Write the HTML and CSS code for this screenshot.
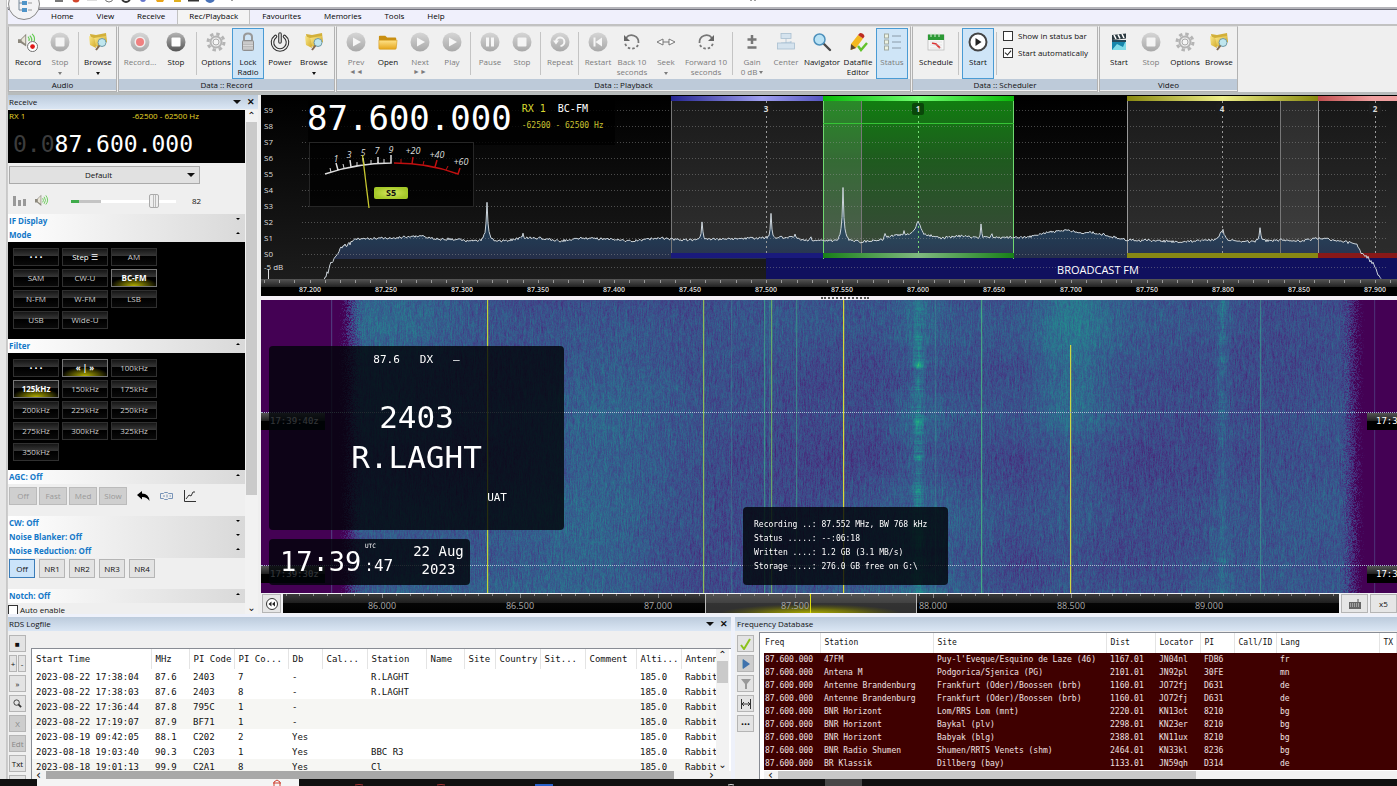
FILE: index.html
```html
<!DOCTYPE html>
<html lang="en">
	<head>
		<meta charset="utf-8">
		<title>SDR Console</title>
		<link rel="stylesheet" href="styles.css">
	</head>
	<body>
		<svg class="defs" aria-hidden="true">
			<defs>
				<linearGradient id="gDark" x2="0" y2="1"><stop offset="0" stop-color="#b5b5b5"/><stop offset="1" stop-color="#555"/></linearGradient>
				<linearGradient id="gDim" x2="0" y2="1"><stop offset="0" stop-color="#d6d6d6"/><stop offset="1" stop-color="#a8a8a8"/></linearGradient>
				<linearGradient id="gGold" x2="0" y2="1"><stop offset="0" stop-color="#ffe38a"/><stop offset="1" stop-color="#e5a51a"/></linearGradient>
				<linearGradient id="gYel" x2="1" y2="1"><stop offset="0" stop-color="#fbe98a"/><stop offset="1" stop-color="#d2a928"/></linearGradient>
			</defs>
			<symbol id="speaker" viewBox="0 0 20 20">
				<path d="M0 7h3l6-6v16l-6-5H0z" fill="#8b877c"/><path d="M4 7l4-4v11l-4-3z" fill="#e9e5d8"/>
				<path d="M11 6q2 3 0 6M13 4q4 5 0 10M15.500 2q5 7 0 13" fill="none" stroke="#63cb52" stroke-width="1.300"/>
			</symbol>
			<symbol id="recsound" viewBox="0 0 22 22">
				<path d="M0 8h3l6-6v14l-6-4H0z" fill="#8b877c"/><path d="M4 8l4-4v9l-4-3z" fill="#e9e5d8"/>
				<path d="M11 5q2 2 1 5M13 4q3 3 2 6M15.500 2q4 4 2 9" fill="none" stroke="#63cb52" stroke-width="1.200"/>
				<circle cx="16" cy="16" r="5.500" fill="#fff" stroke="#666"/><circle cx="16" cy="16" r="2.600" fill="#e01818"/>
			</symbol>
			<symbol id="stop" viewBox="0 0 20 20"><circle cx="10" cy="10" r="9.500" fill="url(#gDark)"/><rect x="5.500" y="5.500" width="9" height="9" rx="1" fill="#fff"/></symbol>
			<symbol id="stopdim" viewBox="0 0 20 20"><circle cx="10" cy="10" r="9.500" fill="url(#gDim)"/><rect x="5.500" y="5.500" width="9" height="9" rx="1" fill="#f4f4f4"/></symbol>
			<symbol id="recdim" viewBox="0 0 20 20"><circle cx="10" cy="10" r="9.500" fill="url(#gDim)"/><circle cx="10" cy="10" r="5.500" fill="#f0eeee"/><circle cx="10" cy="10" r="4" fill="#f08080"/></symbol>
			<symbol id="playdim" viewBox="0 0 20 20"><circle cx="10" cy="10" r="9.500" fill="url(#gDim)"/><path d="M7 5.500l8 4.500-8 4.500z" fill="#f6f6f6"/></symbol>
			<symbol id="pausedim" viewBox="0 0 20 20"><circle cx="10" cy="10" r="9.500" fill="url(#gDim)"/><path d="M6 5.500h3v9H6zM11 5.500h3v9h-3z" fill="#f6f6f6"/></symbol>
			<symbol id="restartdim" viewBox="0 0 20 20"><circle cx="10" cy="10" r="9.500" fill="url(#gDim)"/><path d="M5.500 5.500h2v9h-2zM14 5.500v9L7.500 10z" fill="#f6f6f6"/></symbol>
			<symbol id="repeatdim" viewBox="0 0 20 20"><circle cx="10" cy="10" r="9.500" fill="url(#gDim)"/><path d="M6 9.500a4.200 4.200 0 1 1 4.500 4.500" fill="none" stroke="#f6f6f6" stroke-width="2"/><path d="M3 8.500h6l-3 4z" fill="#f6f6f6"/></symbol>
			<symbol id="browse" viewBox="0 0 20 20">
				<path d="M2 2l6 1 10-2 1 9-9 5-6-2z" fill="#d2b03a"/><path d="M1 4l5 2 2 10-6-3z" fill="url(#gYel)"/><path d="M6 6l12-2-1 7-9 3z" fill="url(#gYel)"/>
				<circle cx="14" cy="10.500" r="4" fill="#bfe6ee" stroke="#6f99a6"/><path d="M11.500 13.500L8 18" stroke="#82694e" stroke-width="2"/>
			</symbol>
			<symbol id="gear" viewBox="0 0 20 20">
				<circle cx="10" cy="10" r="8" fill="none" stroke="#b4b4b4" stroke-width="3" stroke-dasharray="3.400 2.883"/>
				<circle cx="10" cy="10" r="5.500" fill="#ededed" stroke="#b4b4b4" stroke-width="2"/><circle cx="10" cy="10" r="3" fill="#f5f5f5" stroke="#aaa"/>
			</symbol>
			<symbol id="lock" viewBox="0 0 20 20"><path d="M6 9V5q0-3.500 4-3.500T14 5v4" fill="none" stroke="#999" stroke-width="2"/><rect x="4.500" y="8.500" width="11" height="10" rx="1" fill="#bbb" stroke="#8f8f8f"/><path d="M5 11h10M5 13.500h10M5 16h10" stroke="#d9d9d9"/></symbol>
			<symbol id="power" viewBox="0 0 20 20"><g fill="none" stroke-linecap="round"><path d="M5.500 4.500a7.500 7.500 0 1 0 9 0M10 2v8" stroke="#333" stroke-width="3.600"/><path d="M5.500 4.500a7.500 7.500 0 1 0 9 0M10 2v8" stroke="#f4f4f4" stroke-width="1.400"/></g></symbol>
			<symbol id="folder" viewBox="0 0 22 20"><path d="M1 17V4q0-1 1-1h6l2 2h9q1 0 1 1v11z" fill="#c98f12"/><path d="M1 17V8h20l-1 9q0 1-1 1H2q-1 0-1-1z" fill="url(#gGold)" stroke="#d59c1c" stroke-width=".6"/></symbol>
			<symbol id="back" viewBox="0 0 20 20"><path d="M4 6a7 7 0 0 1 12.500 5" fill="none" stroke="#777" stroke-width="1.800"/><path d="M16 13a7 7 0 0 1-13-2" fill="none" stroke="#777" stroke-width="1.800" stroke-dasharray="2.500 2"/><path d="M2 3v6h6z" fill="#666"/></symbol>
			<symbol id="seek" viewBox="0 0 20 20"><path d="M1 10l6-3v6zM19 10l-6-3v6zM7 10h6" fill="#fff" stroke="#777"/></symbol>
			<symbol id="gain" viewBox="0 0 20 20"><path d="M10 3v9M5.500 7.500h9M5.500 15.500h9" stroke="#777" stroke-width="2.500"/></symbol>
			<symbol id="center" viewBox="0 0 20 20"><g fill="#d5e3ee" stroke="#a9bfd0" stroke-width=".8"><rect x="5" y="1.500" width="10" height="5"/><path d="M10 6.500V11M5 11h10v-2"/><rect x="1.500" y="11" width="17" height="6"/></g></symbol>
			<symbol id="loupe" viewBox="0 0 20 20"><path d="M12 12l6 6" stroke="#4a4a4a" stroke-width="2.400" stroke-linecap="round"/><circle cx="7.500" cy="7.500" r="5.500" fill="#b9e2f5" stroke="#4d90bb" stroke-width="1.500"/></symbol>
			<symbol id="edit" viewBox="0 0 20 20"><path d="M3 12L10 3l5 3.500-7 9.500-5 2z" fill="#f3b81e"/><path d="M10 3l2-2q4 0 4.500 3.500L15 6.500z" fill="#bd2d22"/><path d="M2.500 18l.5-6 5 4z" fill="#5b4630"/><path d="M10 14l3 4 6-7" fill="none" stroke="#63c22b" stroke-width="2.400"/></symbol>
			<symbol id="status" viewBox="0 0 20 20"><g fill="#edf3e2" stroke="#a2aaa2"><rect x="2.500" y="2" width="4" height="4"/><rect x="2.500" y="8" width="4" height="4"/><rect x="2.500" y="14" width="4" height="4"/></g><path d="M10 4h9M10 10h9M10 16h9" stroke="#8a9aa8"/></symbol>
			<symbol id="calendar" viewBox="0 0 20 20"><rect x="2" y="3" width="16" height="15" fill="#f7f7f7" stroke="#b5b5b5" stroke-width=".7"/><path d="M2 2.500h16V8H2z" fill="#2c9a35"/><path d="M5 1v4M9 1v4M13 1v4" stroke="#d9f0d9"/><path d="M6 11l4 1 4 4" fill="none" stroke="#d33" stroke-width="1.800"/><path d="M4 10h12M4 13h12M4 16h12" stroke="#ccc" stroke-width=".5"/></symbol>
			<symbol id="start" viewBox="0 0 20 20"><circle cx="10" cy="10" r="8.500" fill="#fff" stroke="#444" stroke-width="2"/><path d="M7.500 6l6 4-6 4z" fill="#222"/></symbol>
			<symbol id="clap" viewBox="0 0 20 20"><path d="M3 3l14-1.500v5L3 8z" fill="#2b3940"/><path d="M5 3l2 4M9 2.500l2 4M13 2l2 4" stroke="#fff" stroke-width="1.600"/><path d="M3 8h14v10H3z" fill="#1786ac"/><path d="M3 18l5-6 6 3 3-7v10z" fill="#80dbe8"/><path d="M3 8h14v2H3z" fill="#24485a"/></symbol>
		</svg>

		<div class="app">
			<div class="titlebar">
				<svg width="800" height="7" aria-hidden="true">
					<path d="M48 0h8v2h-8z" fill="#777"/><circle cx="69" cy="-1" r="3.500" fill="#d2452c"/><path d="M80 0h10" stroke="#bbb"/><circle cx="102" cy="-2" r="4" fill="none" stroke="#777"/><circle cx="119" cy="-2" r="4" fill="none" stroke="#333" stroke-width="2"/><circle cx="136" cy="-1" r="3" fill="#67c"/><path d="M149 0h8l-1 2h-6z" fill="#e9a51a"/><path d="M167 0h7v2h-7z" fill="#e0b020"/><path d="M181 0h11" stroke="#333" stroke-width="3"/><circle cx="203" cy="-2" r="5" fill="#4872b8"/><path d="M224 0h2M743 0h2M747 0h2" stroke="#444"/>
				</svg>
			</div>
			<button class="orb" aria-label="Application menu">
				<svg width="20" height="20" viewBox="0 0 20 20"><path d="M5 4v12h5M5 9h5" fill="none" stroke="#789"/><rect x="2" y="1" width="6" height="5" fill="#4f94c8"/><rect x="8" y="7" width="5" height="4" fill="#4f94c8"/><rect x="8" y="14" width="5" height="4" fill="#4f94c8"/><path d="M14 9h4M14 16h4" stroke="#999"/></svg>
			</button>

			<nav class="tabs">
				<a href="#">Home</a>
				<a href="#">View</a>
				<a href="#">Receive</a>
				<a href="#" class="ac">Rec/Playback</a>
				<a href="#">Favourites</a>
				<a href="#">Memories</a>
				<a href="#">Tools</a>
				<a href="#">Help</a>
			</nav>

			<div class="ribbon">
				<section class="group">
					<div class="tools">
						<button><svg><use href="#recsound"/></svg>Record</button>
						<button class="dim"><svg><use href="#stopdim"/></svg>Stop<i class="down"></i></button>
						<hr>
						<button><svg><use href="#browse"/></svg>Browse<i class="down"></i></button>
					</div>
					<h2>Audio</h2>
				</section>
				<section class="group">
					<div class="tools">
						<button class="w36 dim"><svg><use href="#recdim"/></svg>Record...</button>
						<button class="w36"><svg><use href="#stop"/></svg>Stop</button>
						<hr>
						<button><svg><use href="#gear"/></svg>Options</button>
						<button class="on"><svg><use href="#lock"/></svg>Lock<br>Radio</button>
						<button><svg><use href="#power"/></svg>Power</button>
						<button class="w36"><svg><use href="#browse"/></svg>Browse<i class="down"></i></button>
					</div>
					<h2>Data :: Record</h2>
				</section>
				<section class="group">
					<div class="tools">
						<button class="dim"><svg><use href="#playdim"/></svg>Prev<span class="skip">◄◄</span></button>
						<button><svg><use href="#folder"/></svg>Open</button>
						<button class="dim"><svg><use href="#playdim"/></svg>Next<span class="skip">►►</span></button>
						<button class="dim"><svg><use href="#playdim"/></svg>Play</button>
						<hr>
						<button class="dim"><svg><use href="#pausedim"/></svg>Pause</button>
						<button class="dim"><svg><use href="#stopdim"/></svg>Stop</button>
						<hr>
						<button class="dim"><svg><use href="#repeatdim"/></svg>Repeat</button>
						<hr>
						<button class="dim"><svg><use href="#restartdim"/></svg>Restart</button>
						<button class="w36 dim"><svg><use href="#back"/></svg>Back 10<br>seconds</button>
						<button class="dim"><svg><use href="#seek"/></svg>Seek<i class="down"></i></button>
						<button class="w48 dim"><svg class="flip"><use href="#back"/></svg>Forward 10<br>seconds</button>
						<hr>
						<button class="dim"><svg><use href="#gain"/></svg>Gain<span class="line">0 dB<i class="down"></i></span></button>
						<button class="w36 dim"><svg><use href="#center"/></svg>Center</button>
						<button class="w36"><svg><use href="#loupe"/></svg>Navigator</button>
						<button class="w36"><svg><use href="#edit"/></svg>Datafile<br>Editor</button>
						<button class="on dim"><svg><use href="#status"/></svg>Status</button>
					</div>
					<h2>Data :: Playback</h2>
				</section>
				<section class="group">
					<div class="tools">
						<button class="w40"><svg><use href="#calendar"/></svg>Schedule</button>
						<hr>
						<button class="on"><svg><use href="#start"/></svg>Start</button>
						<hr>
						<div class="checks">
							<label><input type="checkbox">Show in status bar</label>
							<label><input type="checkbox" checked>Start automatically</label>
						</div>
					</div>
					<h2>Data :: Scheduler</h2>
				</section>
				<section class="group">
					<div class="tools">
						<button><svg><use href="#clap"/></svg>Start</button>
						<button class="dim"><svg><use href="#stopdim"/></svg>Stop</button>
						<button class="w36"><svg><use href="#gear"/></svg>Options</button>
						<button><svg><use href="#browse"/></svg>Browse</button>
					</div>
					<h2>Video</h2>
				</section>
			</div>

			<div class="work">
				<aside class="side">
					<header class="bar"><h2>Receive</h2><i class="down big"></i><button aria-label="Close">✕</button></header>
					<div class="sidebody">
						<div class="panels">
							<div class="vfo">
								<div class="vfotop"><span>RX 1</span><span>-62500 - 62500 Hz</span></div>
								<div class="vfonum"><span>0.0</span>87.600.000</div>
							</div>
							<div class="audio">
								<div class="device"><select aria-label="Output device"><option>Default</option></select><i class="down big"></i></div>
								<div class="volume">
									<svg width="14" height="12"><path d="M1 1h3v10H1zM6 5h3v6H6zM11 4h3v7h-3z" fill="#999"/></svg>
									<svg class="spk" width="14" height="14"><use href="#speaker"/></svg>
									<input type="range" id="vol" value="82" aria-label="Volume"><output for="vol">82</output>
								</div>
							</div>
							<h3>IF Display<i class="down small"></i></h3>
							<h3>Mode<i class="up"></i></h3>
							<div class="pad" id="mode">
								<button class="hi">• • •</button><button class="hi">Step ☰</button><button>AM</button>
								<button>SAM</button><button>CW-U</button><button class="ac">BC-FM</button>
								<button>N-FM</button><button>W-FM</button><button>LSB</button>
								<button>USB</button><button>Wide-U</button>
							</div>
							<h3>Filter<i class="up"></i></h3>
							<div class="pad" id="filter">
								<button class="hi">• • •</button><button class="ac">« | »</button><button>100kHz</button>
								<button class="ac">125kHz</button><button>150kHz</button><button>175kHz</button>
								<button>200kHz</button><button>225kHz</button><button>250kHz</button>
								<button>275kHz</button><button>300kHz</button><button>325kHz</button>
								<button>350kHz</button>
							</div>
							<h3>AGC: Off<i class="up"></i></h3>
							<div class="agc">
								<button disabled>Off</button><button disabled>Fast</button><button disabled>Med</button><button disabled>Slow</button>
								<svg width="13" height="12" viewBox="0 0 13 12"><path d="M0 5l5-4v2.500q7 0 7.500 7.500Q10 7 5 7v2.500z" fill="#000"/></svg>
								<svg width="13" height="12" viewBox="0 0 13 12"><path d="M.5 3.500h3l1-1h3l1 1h4v5h-4l-1 1h-3l-1-1h-3zM3 6h2M7 4.500v3M9.500 6h1.500" fill="none" stroke="#7894b8"/></svg>
								<svg width="13" height="12" viewBox="0 0 13 12"><path d="M1.500 0v11.500H13M3 9l3-4 2 1 2-4h2" fill="none" stroke="#333"/></svg>
							</div>
							<h3>CW: Off<i class="down small"></i></h3>
							<h3>Noise Blanker: Off<i class="down small"></i></h3>
							<h3>Noise Reduction: Off<i class="up"></i></h3>
							<div class="nr">
								<button class="ac">Off</button><button>NR1</button><button>NR2</button><button>NR3</button><button>NR4</button>
							</div>
							<h3>Notch: Off<i class="up"></i></h3>
							<label class="notch"><input type="checkbox">Auto enable</label>
						</div>
						<div class="vscroll"><span>⌃</span><b></b><span class="end">⌄</span></div>
					</div>
				</aside>

				<main class="view">
					<div class="spectrum">
						<svg id="spec" width="100%" height="199">
							<defs>
								<linearGradient id="bg" x2="0" y2="1"><stop offset="0" stop-color="#000"/><stop offset="1" stop-color="#1c1c1c"/></linearGradient>
								<linearGradient id="fill" x2="0" y2="1"><stop offset="0" stop-color="#24536b"/><stop offset=".6" stop-color="#26405f"/><stop offset="1" stop-color="#2c2448"/></linearGradient>
								<linearGradient id="green" x2="0" y2="1"><stop offset="0" stop-color="#10800f"/><stop offset=".4" stop-color="#1f5a1f"/><stop offset="1" stop-color="#3d463d"/></linearGradient>
								<linearGradient id="b3"><stop offset="0" stop-color="#252590"/><stop offset=".6" stop-color="#a0a0f0"/><stop offset="1" stop-color="#5555c0"/></linearGradient>
								<linearGradient id="b1"><stop offset="0" stop-color="#08b808"/><stop offset=".5" stop-color="#70ff70"/><stop offset="1" stop-color="#08b808"/></linearGradient>
								<linearGradient id="b1b"><stop offset="0" stop-color="#188018"/><stop offset=".5" stop-color="#80b880"/><stop offset="1" stop-color="#188018"/></linearGradient>
								<linearGradient id="b4"><stop offset="0" stop-color="#888810"/><stop offset=".5" stop-color="#eeee88"/><stop offset="1" stop-color="#888810"/></linearGradient>
								<linearGradient id="b2"><stop offset="0" stop-color="#c05050"/><stop offset=".3" stop-color="#f0a0a0"/></linearGradient>
								<linearGradient id="axis" x2="0" y2="1"><stop offset="0" stop-color="#555"/><stop offset=".5" stop-color="#222"/><stop offset=".5" stop-color="#000"/><stop offset="1" stop-color="#000"/></linearGradient>
								<radialGradient id="badge"><stop offset="0" stop-color="#d8ea60"/><stop offset="1" stop-color="#a4c828"/></radialGradient>
								<clipPath id="clip"><rect width="100%" height="183"/></clipPath>
							</defs>
							<rect width="100%" height="183" fill="url(#bg)"/>
							<rect x="410" width="152" height="162" fill="#fff" fill-opacity=".1"/>
							<rect x="562" width="191" height="162" fill="url(#green)"/>
							<rect x="562" width="38" height="162" fill="#fff" fill-opacity=".1"/>
							<rect x="866" width="191" height="162" fill="#fff" fill-opacity=".1"/>
							<rect x="1019" width="38" height="162" fill="#fff" fill-opacity=".08"/>
							<rect x="1057" width="100%" height="162" fill="#fff" fill-opacity=".09"/>
							<path id="area" fill="url(#fill)" fill-opacity=".8"/>
							<rect x="505" y="162" width="100%" height="21" fill="#10105e"/>
							<g id="grid"></g>
							<path d="M410.500 0v162M600.500 0v162M1019.500 0v162" stroke="#777"/>
							<path d="M866.500 0v162M1057.500 0v162" stroke="#999"/>
							<path d="M562.500 0v163M752.500 0v163" stroke="#70d870"/>
							<path d="M562 27.500h191" stroke="#36c436"/>
							<path d="M505.500 5v152M961.500 5v152M1114.500 5v152" stroke="#999" stroke-dasharray="2 3"/>
							<path d="M657.500 5v152" stroke="#7d7" stroke-dasharray="2 3"/>
							<rect x="410" width="152" height="5" fill="url(#b3)"/><rect x="410" y="157" width="152" height="5" fill="#1a1a7c"/>
							<rect x="562" width="191" height="5" fill="url(#b1)"/><rect x="562" y="157" width="191" height="5" fill="url(#b1b)"/>
							<rect x="866" width="191" height="5" fill="url(#b4)"/><rect x="866" y="157" width="191" height="5" fill="#888814"/>
							<rect x="1057" width="180" height="5" fill="url(#b2)"/><rect x="1057" y="157" width="100%" height="5" fill="#881818"/>
							<rect x="499" y="7" width="12" height="12" rx="2" fill="#1c1c1c"/><rect x="651" y="7" width="12" height="12" rx="2" fill="#0a470a"/><rect x="955" y="7" width="12" height="12" rx="2" fill="#1c1c1c"/><rect x="1108" y="7" width="12" height="12" rx="2" fill="#1c1c1c"/>
							<g class="num"><text x="505" y="16">3</text><text x="657" y="16">1</text><text x="961" y="16">4</text><text x="1114" y="16">2</text></g>
							<path id="trace" fill="none" stroke="#ccd4da" clip-path="url(#clip)"/>
							<text class="fm" x="837" y="178">BROADCAST FM</text>
							<rect y="183" width="100%" height="16" fill="url(#axis)"/>
							<g id="axislabels" class="axis"></g>
							<path d="M7.500 173v10" stroke="#ddd"/>
							<rect x="47" y="1" width="307" height="48" fill="#000" fill-opacity=".8"/>
							<rect x="48.500" y="46.500" width="164" height="64" fill="#000" fill-opacity=".75" stroke="#262626"/>
							<g fill="none" stroke="#ddd" stroke-width="1.500">
								<path d="M64 78Q96 67 130 67V59M77 74l-2-7M90 71l-1-7M103 69l-1-7M117 68v-7"/>
								<path d="M70 76l-1-4M83 72l-1-4M96 70v-4M110 68v-4M123 67v-4" stroke-width="1"/>
								<path d="M133 67Q168 67 197 78l2-6M151 68l1-7M174 71l2-7" stroke="#c01010"/><path d="M140 67v-4M162 69l1-4M185 74l2-4" stroke="#c01010" stroke-width="1"/>
							</g>
							<g class="scale"><text x="75" y="66">1</text><text x="88" y="62">3</text><text x="102" y="60">5</text><text x="116" y="58">7</text><text x="130" y="57">9</text><text x="152" y="58">+20</text><text x="176" y="62">+40</text><text x="200" y="69">+60</text></g>
							<path d="M101.500 59l6.500 53" stroke="#c8c830" stroke-width="1.300"/>
							<rect x="113" y="91" width="34" height="12" rx="2" fill="url(#badge)"/><text class="s5" x="130" y="100">S5</text>
						</svg>
						<div class="bigfreq">
							<span class="freq">87.600.000</span>
							<span class="rx"><b>RX 1</b> BC-FM<small>-62500 - 62500 Hz</small></span>
						</div>
					</div>
					<div class="split"><i></i></div>
					<div class="fall">
						<canvas id="fall"></canvas>
						<div class="timeline first"><span>17:39:40z</span><span class="r">17:39:40z</span></div>
						<div class="timeline second"><span>17:39:30z</span><span class="r">17:39:30z</span></div>
						<div class="rds">
							<p class="top">87.6<span>DX</span>—</p>
							<p class="pi">2403</p>
							<p class="ps">R.LAGHT</p>
							<p class="uat">UAT</p>
						</div>
						<div class="clock">
							<div class="time">17:39<small>:47</small><sup>UTC</sup></div>
							<div class="date">22 Aug<br>2023</div>
						</div>
						<pre class="recinfo">Recording ..: 87.552 MHz, BW 768 kHz
Status .....: --:06:18
Written ....: 1.2 GB (3.1 MB/s)
Storage ....: 276.0 GB free on G:\</pre>
					</div>
					<div class="navbar">
						<button class="rew" aria-label="Rewind"><svg width="14" height="14" viewBox="0 0 14 14"><circle cx="7" cy="7" r="5.500" fill="#fff" stroke="#333"/><path d="M6.500 4.500v5L3.500 7zM10 4.500v5L7 7z" fill="#222"/></svg></button>
						<svg id="nav" class="scaleline" height="19">
							<defs>
								<linearGradient id="navbg" x2="0" y2="1"><stop offset="0" stop-color="#3a3a3a"/><stop offset=".5" stop-color="#1c1c1c"/><stop offset=".5" stop-color="#050505"/><stop offset="1" stop-color="#000"/></linearGradient>
								<radialGradient id="glow"><stop offset="0" stop-color="#b8b800"/><stop offset=".5" stop-color="#8a8a00" stop-opacity=".7"/><stop offset="1" stop-color="#606000" stop-opacity="0"/></radialGradient>
							</defs>
							<rect width="100%" height="19" fill="url(#navbg)"/>
							<rect x="422" width="212" height="19" fill="#777" fill-opacity=".4"/>
							<ellipse cx="528" cy="20" rx="92" ry="10" fill="url(#glow)"/>
							<path d="M422.500 0v19M633.500 0v19" stroke="#bbb"/>
							<path d="M527.500 0v19" stroke="#e0e010"/>
							<g id="navlabels" class="navtext"></g>
						</svg>
						<button class="kbd" aria-label="Keyboard"><svg width="12" height="10" viewBox="0 0 12 10"><path d="M9 0v3" stroke="#555"/><rect y="3" width="12" height="7" fill="#666"/><path d="M1 5h10M1 7h10" stroke="#ddd" stroke-dasharray="1 1"/></svg></button>
						<button class="x5">x5</button>
					</div>
				</main>
			</div>

			<div class="docks">
				<section class="dock log">
					<header class="bar"><h2>RDS Logfile</h2><i class="down big"></i><button aria-label="Close log">✕</button></header>
					<div class="dockbody">
						<div class="vbar">
							<button>■</button>
							<div class="pair"><button>+</button><button>-</button></div>
							<button>»</button>
							<button aria-label="Search"><svg width="9" height="9" viewBox="0 0 10 10"><circle cx="4" cy="4" r="3" fill="none" stroke="#333"/><path d="M6 6l3 3" stroke="#333" stroke-width="2"/></svg></button>
							<button disabled>X</button>
							<button disabled>Edt</button>
							<button>Txt</button>
							<button aria-label="More"></button>
						</div>
						<div class="grid">
							<div class="gridmain">
								<div class="clipx">
									<table>
										<colgroup><col class="c119"><col class="c38"><col class="c45"><col class="c54"><col class="c34"><col class="c45"><col class="c59"><col class="c38"><col class="c31"><col class="c45"><col class="c45"><col class="c51"><col class="c45"><col class="c45"></colgroup>
										<thead><tr><th>Start Time</th><th>MHz</th><th>PI Code</th><th>PI Co...</th><th>Db</th><th>Cal...</th><th>Station</th><th>Name</th><th>Site</th><th>Country</th><th>Sit...</th><th>Comment</th><th>Alti...</th><th>Antenna</th></tr></thead>
										<tbody id="logrows"></tbody>
									</table>
								</div>
								<div class="vscroll"><span>⌃</span><b></b><span class="end">⌄</span></div>
							</div>
							<div class="hscroll"><span>‹</span><b></b><span>›</span></div>
						</div>
					</div>
				</section>
				<section class="dock db">
					<header class="bar"><h2>Frequency Database</h2></header>
					<div class="dockbody">
						<div class="vbar">
							<button aria-label="Apply"><svg width="12" height="12"><path d="M1 7l3 4 6-10" fill="none" stroke="#8cc21e" stroke-width="2"/></svg></button>
							<button class="grey" aria-label="Play"><svg width="12" height="12"><path d="M3 1v10l7-5z" fill="#3f72ad"/><path d="M3 1L2 2v8l1 1z" fill="#8ab"/></svg></button>
							<button aria-label="Filter"><svg width="12" height="12"><path d="M1 1h10L7 6v5H5V6z" fill="#999"/></svg></button>
							<button aria-label="Fit columns"><svg width="12" height="10"><path d="M1.500 0v10M10.500 0v10M2 5h8M4 3L2 5l2 2M8 3l2 2-2 2" fill="none" stroke="#333"/></svg></button>
							<button>•••</button>
						</div>
						<div class="grid">
							<div class="clipx">
								<table>
									<colgroup><col class="c56"><col class="c113"><col class="c173"><col class="c49"><col class="c45"><col class="c34"><col class="c42"><col class="c103"><col></colgroup>
									<thead><tr><th>Freq</th><th>Station</th><th>Site</th><th>Dist</th><th>Locator</th><th>PI</th><th>Call/ID</th><th>Lang</th><th>TX</th></tr></thead>
									<tbody id="dbrows"></tbody>
								</table>
							</div>
							<div class="hscroll"><span>‹</span><b></b></div>
						</div>
					</div>
				</section>
			</div>

			<footer class="taskbar">
				<div class="search"><svg width="12" height="7"><path d="M3 7V3l3-2 3 2v4M2 4h8" fill="none" stroke="#d04030"/></svg></div>
				<svg width="600" height="7"><path d="M56 6q4-1 8 0M138 6q4-1 8 0" stroke="#a33" fill="none"/><path d="M236 6h18" stroke="#2860c8" stroke-width="2"/><path d="M429 6q3-1 6 0" stroke="#ddd" fill="none"/><rect x="526" width="37" height="7" fill="#484848"/></svg>
			</footer>
		</div>
		<script src="script.js"></script>
	</body>
</html>
```
FILE: styles.css
```css
*{margin: 0; padding: 0; box-sizing: border-box;}
body{font-family: "Open Sans", "Noto Sans", sans-serif; font-size: 8px; line-height: 10px; color: #111; background: #efefef; overflow: hidden;}
button, input, select{font: inherit; color: inherit;}
button{display: flex; align-items: center; justify-content: center; border: 1px solid #b5b5b5; background: #e3e3e3;}
h2, h3{font-size: 8px; font-weight: normal;}
table{border-collapse: collapse; table-layout: fixed; width: 100%;}
.defs{position: absolute; width: 0; height: 0;}
.app{position: relative; display: flex; flex-direction: column; height: 100vh; padding-left: 8px; background: linear-gradient(90deg, #e6e6e6 6px, #aaa 7px, #efefef 8px); overflow: hidden;}

/* arrows */
.down{display: block; width: 0; height: 0; border: 2px solid transparent; border-top: 3px solid currentColor; border-bottom: 0;}
.down.big{border-width: 4px; border-top-width: 4px; border-bottom: 0;}
.down.small{border-width: 2px; border-bottom: 0;}
.up{display: block; width: 0; height: 0; border: 2px solid transparent; border-bottom: 2px solid #000; border-top: 0;}

/* title and tabs */
.titlebar{height: 9px; flex: none; margin-left: -1px; background: #fff; border-bottom: 2px solid #b5b5ba;}
.titlebar svg{display: block;}
.orb{position: absolute; left: 8px; top: -12px; width: 32px; height: 32px; border-radius: 50%; background: #f3f3f5; border: 1px solid #888; z-index: 2;}
.tabs{display: flex; flex: none; gap: 1px; height: 15px; padding-left: 32px; background: #f0f0fc; border-top: 1px solid #70707c;}
.tabs a{padding: 0 11px; line-height: 12px; color: #000; text-decoration: none;}
.tabs .ac{background: #f4f4f4; border: 1px solid #c2c2c2; border-width: 0 1px;}

/* ribbon */
.ribbon{display: flex; flex: none; gap: 1px; height: 71px; background: #efefef; border-top: 2px solid #c2c2c2; border-bottom: 3px solid #b8bcbc;}
.group{display: flex; flex-direction: column; border: 1px solid #b2b2b2; border-top-color: #ddd; padding: 1px 2px 1px 3px; background: #f0f0f0; flex: none;}
.group h2{height: 11px; margin: 0 -2px 0 -3px; line-height: 11px; text-align: center; background: #bdcad9;}
.tools{display: flex; flex: 1;}
.tools hr{width: 1px; margin: 4px 3px 4px 2px; border: 0; background: #c4c4c4;}
.tools button{flex-direction: column; justify-content: flex-start; width: 32px; height: 51px; padding-top: 3px; background: none; border: 1px solid transparent; white-space: nowrap;}
.tools button svg{width: 20px; height: 20px; flex: none; margin-bottom: 5px;}
.tools .w36{width: 36px;}
.tools .w40{width: 40px;}
.tools .w48{width: 48px;}
.tools .dim{color: #7c7c7c;}
.tools .on{background: #cfe5f7; border-color: #4a9bd4;}
.tools .down{margin-top: 5px;}
.line{display: flex; align-items: center; gap: 2px;}
.tools .line .down{margin-top: 0;}
.flip{transform: scaleX(-1);}
.skip{font-size: 7px;}
.checks{display: flex; flex-direction: column; gap: 6px; padding: 2px 7px 0 3px;}
.checks label{display: flex; align-items: center; gap: 5px; height: 11px;}
input[type=checkbox]{appearance: none; width: 10px; height: 10px; border: 1px solid #333; background: #fff;}
input[type=checkbox]:checked::after{content: ""; display: block; width: 3px; height: 5px; margin: 0 0 0 2px; border: solid #222; border-width: 0 1px 1px 0; transform: rotate(40deg);}

/* dock title */
.bar{display: flex; align-items: center; gap: 5px; height: 14px; flex: none; padding: 0 3px 0 1px; background: linear-gradient(#bccbdc, #dae6f4);}
.bar h2{flex: 1;}
.bar button{width: 9px; height: 12px; border: 0; background: none; font-size: 9px; font-weight: bold;}

/* receive panel */
.work{display: flex; flex: 1; min-height: 0;}
.side{display: flex; flex-direction: column; width: 250px; margin-right: 3px; flex: none; overflow: hidden;}
.sidebody{display: flex; flex: 1; min-height: 0; padding-top: 1px;}
.panels{flex: 1; min-width: 0; overflow: hidden;}
.vfo{height: 53px; background: #000; color: #fff;}
.vfotop{display: flex; justify-content: space-between; padding: 1px 46px 0 1px; color: #e8d828;}
.vfonum{padding-left: 5px; font: 23px/46px "DejaVu Sans Mono", monospace;}
.vfonum span{color: #3c3c3c;}
.audio{height: 51px; padding: 3px 1px;}
.device{display: flex; align-items: center; width: 191px; height: 18px; padding-right: 4px; border: 1px solid #aaa; background: #e1e1e1;}
.device select{flex: 1; appearance: none; border: 0; background: none; text-align-last: center;}
.volume{display: flex; align-items: center; height: 34px; padding-left: 3px;}
.volume .spk{margin: 0 22px 0 9px;}
.volume output{margin-left: 16px;}
.volume input{appearance: none; width: 105px; height: 16px; background: linear-gradient(90deg, #3fab4b 8px, #c4c4c4 8px, #c4c4c4 30px, #fff 30px) center / 100% 3px no-repeat;}
.volume input::-webkit-slider-thumb{appearance: none; width: 10px; height: 14px; border: 1px solid #aaa; border-radius: 2px; background: linear-gradient(90deg, #eee 3px, #bbb 3px, #bbb 4px, #eee 4px, #eee 5px, #bbb 5px, #bbb 6px, #eee 6px);}
h3{display: flex; justify-content: space-between; align-items: center; height: 14px; padding: 0 5px 0 1px; font-weight: 700; color: #1478c8; background: linear-gradient(90deg, #fff, #d9d9d9);}
h3 i{color: #000; margin-bottom: 4px;}
.pad{display: grid; grid-template-columns: repeat(3, 46px); grid-auto-rows: 18px; gap: 3px; align-content: start; padding: 6px 5px; background: #000;}
.pad button{border-color: #303030; color: #ccc; background: linear-gradient(#161616, #383838 45%, #000 45%, #0a0a0a);}
.pad .hi{color: #fff;}
.pad .ac{border-color: #777; color: #fff; font-weight: bold; background: radial-gradient(ellipse 24px 9px at 50% 100%, #b4b000, transparent), linear-gradient(#161616, #383838 45%, #000 45%);}
#mode{height: 97px;}
#filter{height: 117px;}
.agc, .nr{display: flex; align-items: center; gap: 2px; height: 32px; padding: 0 1px 8px;}
.agc button{width: 28px; height: 18px; color: #999; background: #cfcfcf; border-color: #bbb;}
.agc svg{margin-left: 8px;}
.nr{gap: 4px; height: 31px; padding-bottom: 10px;}
.nr button{width: 26px; height: 19px;}
.nr .ac{background: #cbe4fa; border: 1px solid #3a7cb8;}
.notch{display: flex; align-items: center; gap: 2px; padding-top: 2px;}
.vscroll{display: flex; flex-direction: column; align-items: center; width: 13px; flex: none; background: #f2f2f2; font: 10px/12px "DejaVu Sans", sans-serif;}
.vscroll b{width: 11px; height: 373px; background: #cacaca;}
.vscroll .end{margin-top: auto;}

/* spectrum */
.view{display: flex; flex-direction: column; flex: 1; min-width: 0;}
.spectrum{position: relative; height: 201px; flex: none; padding-top: 1px; background: #000; overflow: hidden;}
.spectrum svg{display: block;}
.spectrum text{fill: #ddd;}
.num{font-weight: bold; text-anchor: middle;}
.spectrum .fm{font-size: 11px; text-anchor: middle; fill: #fff;}
.spectrum .axis{font-size: 7px; font-weight: 600; text-anchor: middle;}
.scale{font-size: 9px; font-style: italic; text-anchor: middle;}
.spectrum .s5{font-size: 9px; font-weight: bold; text-anchor: middle; fill: #111;}
.bigfreq{position: absolute; left: 46px; top: 2px; display: flex; gap: 10px; font-family: "DejaVu Sans Mono", monospace; color: #fff;}
.freq{font-size: 34px; line-height: 42px;}
.rx{padding-top: 5px; font-size: 10px; line-height: 13px; white-space: pre;}
.rx b{margin-right: 6px; font-weight: normal; color: #d8d830;}
.rx small{display: block; margin-top: 4px; font-size: 8px; color: #c8c030;}
.split{display: flex; align-items: center; justify-content: center; height: 4px; flex: none; background: #f4f0f6;}
.split i{width: 48px; height: 0; margin-left: 32px; border-top: 2px dotted #555;}

/* waterfall */
.fall{position: relative; flex: 1; min-height: 0; overflow: hidden; font-family: "DejaVu Sans Mono", monospace; color: #fff;}
.fall canvas{display: block; width: 100%; height: 100%;}
.timeline{position: absolute; left: 0; right: 0; border-top: 1px dotted #a9bccf;}
.timeline.first{top: 112px;}
.timeline.second{top: 265px;}
.timeline span{position: absolute; left: 0; top: 0; width: 64px; padding-left: 9px; font-size: 9px; line-height: 17px; background: linear-gradient(#555, #222 45%, #000 45%);}
.timeline .r{left: auto; right: -34px;}
.rds, .clock, .recinfo{position: absolute; background: rgba(0, 4, 8, .8); border-radius: 4px;}
.rds{left: 8px; top: 46px; width: 295px; height: 184px; text-align: center; font-size: 31px; line-height: 40px;}
.rds .top, .rds .uat{font-size: 11px; line-height: 14px;}
.rds .top{padding-top: 7px;}
.rds .top span{margin: 0 20px;}
.rds .pi{margin-top: 30px;}
.rds .uat{margin: 14px 57px 0 0; text-align: right;}
.clock{left: 8px; bottom: 8px; display: flex; align-items: center; gap: 20px; width: 201px; height: 46px; padding-left: 11px;}
.time{position: relative; padding-top: 4px; font-size: 27px;}
.time small{margin-left: 3px; font-size: 16px;}
.time sup{position: absolute; left: 85px; top: -11px; font-size: 6px; line-height: 8px;}
.date{padding-bottom: 4px; font-size: 14px; line-height: 18px; text-align: center;}
.recinfo{left: 482px; bottom: 8px; width: 205px; padding: 11px; font: 8px/14px "DejaVu Sans Mono", monospace;}
.navbar{display: flex; height: 21px; flex: none; gap: 2px; padding: 1px 0 1px 1px; background: #f1f1f4;}
.navbar button{flex: none; background: #e6e6e6;}
.rew{width: 19px;}
.scaleline{flex: 1; min-width: 0; width: 0; background: #000;}
.kbd, .x5{width: 27px;}
.navtext{font-size: 9px; text-anchor: middle; fill: #aaa;}

/* docks */
.docks{display: flex; gap: 4px; height: 165px; flex: none; padding-top: 3px; background: #eef1fa; overflow: hidden;}
.dock{display: flex; flex-direction: column; background: #f0f0f0; min-width: 0; overflow: hidden;}
.log{width: 723px; flex: none;}
.db{flex: 1;}
.dockbody{display: flex; flex: 1; min-height: 0; gap: 5px; padding-left: 1px;}
.db .dockbody{padding-left: 2px;}
.db .bar{padding-left: 2px;}
.vbar{display: flex; flex-direction: column; gap: 3px; width: 17px; flex: none; padding-top: 4px;}
.vbar button{width: 17px; height: 17px; flex: none;}
.pair{display: flex; gap: 1px;}
.vbar .pair button{width: 8px;}
.grey, .vbar button:disabled{background: #cdcdcd; color: #888;}
.grid{display: flex; flex-direction: column; flex: 1; min-width: 0; background: #fff; border: solid #888c94; border-width: 1px 0 0 1px; font-family: "DejaVu Sans Mono", monospace;}
.log .grid{margin-top: 17px; font-size: 9px;}
.db .grid{margin-top: 1px; padding-left: 4px;}
.gridmain{display: flex; flex: 1; min-height: 0;}
.clipx{flex: 1; min-width: 0; min-height: 0; overflow: hidden;}
.log table{width: 694px;}
th, td{padding: 0 0 0 4px; text-align: left; font-weight: normal; white-space: nowrap; overflow: hidden;}
th{height: 20px; border-right: 1px solid #e4e4e4;}
.log td{height: 15px;}
.log tbody tr:nth-child(4n+3), .log tbody tr:nth-child(4n+4){background: #f6f6f3;}
.db td{height: 13px; background: #3f0000; color: #f0e0e0;}
.db td:first-child, .db th:first-child{padding-left: 1px;}
.grid .vscroll b{height: 22px;}
.log .vscroll{margin-right: 2px;}
.hscroll{display: flex; align-items: center; gap: 4px; height: 8px; flex: none; padding: 0 3px; background: #f2f2f2; font-size: 12px;}
.hscroll b{height: 8px; background: #a8a8a8;}
.log .hscroll{padding-right: 16px;}
.log .hscroll b{width: 628px; margin-right: auto;}
.db .hscroll b{width: 418px; background: #c8c8c8;}

.c119{width: 119px;}
.c38{width: 38px;}
.c45{width: 45px;}
.c54{width: 54px;}
.c34{width: 34px;}
.c59{width: 59px;}
.c31{width: 31px;}
.c51{width: 51px;}
.c56{width: 56px;}
.c113{width: 113px;}
.c173{width: 173px;}
.c49{width: 49px;}
.c42{width: 42px;}
.c103{width: 103px;}

/* taskbar */
.taskbar{display: flex; height: 7px; flex: none; margin-left: -8px; padding-left: 37px; background: #101010;}
.search{width: 262px; padding-left: 234px; background: #f4f4f4;}
.taskbar svg{display: block;}
```
FILE: script.js
```js
var seed = 7;
function rnd(){
	seed = (seed * 1664525 + 1013904223) % 4294967296;
	return seed / 4294967296;
}
function fill(id, html){
	document.getElementById(id).innerHTML += html;
}

// spectrum grid and labels
var grid = "";
var names = ["S9", "S8", "S7", "S6", "S5", "S4", "S3", "S2", "S1", "S0", "-5 dB"];
for(var i = 0; i < names.length; i++){
	var y = i === 10 ? 171 : 14 + i * 16;
	grid += '<path d="M41 ' + (y + 0.5) + 'H1127" stroke="#999" stroke-opacity=".45" stroke-dasharray="1 2"/>';
	grid += '<text x="3" y="' + (y + 3) + '">' + names[i] + '</text>';
}
fill("grid", grid);

var ticks = "", labels = "";
for(var i = -3; i < 80; i++){
	var x = Math.round(48.5 + i * 15.22);
	ticks += "M" + (x + 0.5) + " 184v3";
}
for(var i = 0; i < 16; i++){
	labels += '<text x="' + Math.round(48.5 + i * 76.1) + '" y="196">' + (87.2 + i * 0.05).toFixed(3) + '</text>';
}
fill("axislabels", '<path d="' + ticks + '" stroke="#999"/>' + labels);

ticks = ""; labels = "";
for(var i = -8; i < 80; i++){
	ticks += "M" + (Math.round(99 + i * 13.78) + 0.5) + " 0v" + (i % 10 ? 2 : 4);
}
for(var i = 0; i < 7; i++){
	labels += '<text x="' + Math.round(99 + i * 137.8) + '" y="15">' + (86 + i * 0.5).toFixed(3) + '</text>';
}
fill("navlabels", '<path d="' + ticks + '" stroke="#888"/>' + labels);

// signal trace: floor points, then carriers on top
var floor = [[62,184],[67,176],[71,165],[75,160],[80,151],[86,149],[95,143],[130,142],[160,140],[175,143],[190,143],[206,145],[245,145],[260,142],[277,142],[300,145],[320,142],[345,143],[370,145],[399,142],[420,144],[470,143],[505,142],[535,141],[540,144],[562,145],[590,145],[600,146],[620,144],[630,140],[650,138],[665,139],[680,142],[700,140],[715,142],[767,141],[790,136],[806,134],[812,135],[820,138],[828,136],[850,140],[866,144],[900,145],[920,146],[950,144],[985,146],[1020,144],[1040,145],[1058,142],[1080,145],[1095,148],[1101,157],[1108,163],[1112,168],[1120,184]];
// x, height, width
var peaks = [[226,28,1],[226,11,4],[262,4,1],[441,13,1],[441,4,3],[510,20,1],[510,4,3],[534,4,1],[550,4,1],[582,40,1],[582,14,4],[624,5,1],[643,4,1],[657,12,4],[720,13,1],[731,5,1],[961,9,4],[962,3,1],[999,9,1],[999,4,3]];
var d = "", k = 0;
for(var x = 62; x <= 1120; x++){
	while(floor[k + 1][0] < x) k++;
	var a = floor[k], b = floor[k + 1];
	var y = a[1] + (b[1] - a[1]) * (x - a[0]) / (b[0] - a[0]);
	for(var j = 0; j < peaks.length; j++){
		var dist = Math.abs(x - peaks[j][0]) / peaks[j][2];
		y -= peaks[j][1] * (0.8 * Math.exp(-dist * dist * 1.5) + 0.2 / (1 + dist * dist));
	}
	y += (rnd() - 0.5) * (x < 90 || x > 1095 ? 4 : 2.4);
	d += (d ? "L" : "M") + x + " " + y.toFixed(1);
}
document.getElementById("trace").setAttribute("d", d);
document.getElementById("area").setAttribute("d", d + "V163H62Z");
document.getElementById("area").style.clipPath = "inset(0 0 21px 0)";

// waterfall
var stops = [[68,1,84],[72,36,117],[64,67,135],[52,94,141],[41,121,142],[32,144,140],[34,167,132],[68,190,112],[121,209,81],[189,222,38],[253,231,36]];
function colour(v){
	v = Math.max(0, Math.min(0.999, v)) * 10;
	var n = Math.floor(v), f = v - n, a = stops[n], b = stops[n + 1];
	return [a[0] + (b[0] - a[0]) * f, a[1] + (b[1] - a[1]) * f, a[2] + (b[2] - a[2]) * f];
}
function bell(x, c, w){
	return Math.exp(-(x - c) * (x - c) / (w * w));
}
function drawFall(){
	var cv = document.getElementById("fall"), w = cv.clientWidth, h = cv.clientHeight;
	cv.width = w;
	cv.height = h;
	seed = 7;
	var ctx = cv.getContext("2d"), img = ctx.createImageData(w, h);
	var streak = [], spots = [], weak = [];
	for(var x = 0; x < w; x++) streak.push(0);
	for(var y = 0; y < h; y++){
		spots[y] = (y ? spots[y - 1] * 0.8 : 0) + (rnd() - 0.44) * 0.16;
		weak[y] = (y ? weak[y - 1] * 0.88 : 0) + (rnd() - 0.5) * 0.07;
	}
	for(var y = 0; y < h; y++){
		var row = 0.02 * Math.sin(y / 15) + 0.02 * Math.sin(y / 41 + 1);
		for(var x = 0; x < w; x++){
			streak[x] = streak[x] * 0.72 + (rnd() - 0.5) * 0.085;
			var v = 0.245 + row * (0.6 + 0.4 * Math.sin(x / 90)) + streak[x] + (rnd() - 0.5) * 0.035;
			v += 0.025 * Math.sin(x / 60 + y / 80) + 0.05 * bell(x, 330, 70) * Math.min(1, y / 80);
			v += 0.04 * bell(x, 130, 70) + bell(x, 657, 28) * (0.05 + weak[y] * 0.5) + bell(x, 657, 5) * (0.06 + Math.max(0, spots[y] * (y < 220 ? 1 : 0.4)));
			v += bell(x, 809, 38) * (0.1 - y / 6000 - (y > 130 ? 0.03 : 0)) + bell(x, 961, 5) * (0.05 + Math.max(0, weak[y])) + bell(x, 961, 20) * 0.02;
			v -= 0.04 * bell(x, 440, 50) * Math.max(0, 1 - y / 160) + 0.03 * bell(x, 760, 30);
			// receiver passband edges
			var edge = Math.min((x - 76 - rnd() * 12) / 16, (1104 - x - rnd() * 12) / 16);
			v *= Math.max(0, Math.min(1, edge));
			var c = colour(v), p = (y * w + x) * 4;
			img.data[p] = c[0];
			img.data[p + 1] = c[1];
			img.data[p + 2] = c[2];
			img.data[p + 3] = 255;
		}
	}
	ctx.putImageData(img, 0, 0);
	// x, colour, strength, first row
	var lines = [[226,"#c8dc30",0.95,0],[442,"#9fce50",0.85,0],[582,"#e0e030",0.95,0],[809,"#e2e238",0.9,45],[510,"#7ccc5a",0.7,0],[503,"#3cb888",0.6,0],[508,"#3cb888",0.25,0],[535,"#3cb888",0.5,0],[720,"#4cc880",0.7,0],[999,"#3cb890",0.5,0],[70,"#5a6ca0",0.5,0],[470,"#3aa898",0.3,0],[674,"#3aa898",0.3,0],[1113,"#5a6ca0",0.4,0]];
	for(var i = 0; i < lines.length; i++){
		ctx.fillStyle = lines[i][1];
		ctx.globalAlpha = lines[i][2];
		ctx.fillRect(lines[i][0], lines[i][3], 1, h);
		ctx.globalAlpha = lines[i][2] * 0.2;
		ctx.fillRect(lines[i][0] + 1, lines[i][3], 1, h);
	}
}
drawFall();
window.onresize = drawFall;

// tables
function rows(id, list){
	var html = "";
	for(var i = 0; i < list.length; i++){
		html += "<tr><td>" + list[i].join("</td><td>") + "</td></tr>";
	}
	fill(id, html);
}
var log = [
	["2023-08-22 17:38:04", "87.6", "2403", "7", "-", "R.LAGHT"],
	["2023-08-22 17:38:03", "87.6", "2403", "8", "-", "R.LAGHT"],
	["2023-08-22 17:36:44", "87.8", "795C", "1", "-", ""],
	["2023-08-22 17:19:07", "87.9", "BF71", "1", "-", ""],
	["2023-08-19 09:42:05", "88.1", "C202", "2", "Yes", ""],
	["2023-08-18 19:03:40", "90.3", "C203", "1", "Yes", "BBC R3"],
	["2023-08-18 19:01:13", "99.9", "C2A1", "8", "Yes", "Cl"]
];
rows("logrows", log.map(function(r){
	return [r[0], r[1], r[2], r[3], r[4], "", r[5], "", "", "", "", "", "185.0", "Rabbit"];
}));
rows("dbrows", [
	["47FM", "Puy-l'Eveque/Esquino de Laze (46)", "1167.01", "JN04nl", "FDB6", "fr"],
	["Antena M", "Podgorica/Sjenica (PG)", "2101.01", "JN92pl", "30FE", "mn"],
	["Antenne Brandenburg", "Frankfurt (Oder)/Boossen (brb)", "1160.01", "JO72fj", "D631", "de"],
	["Antenne Brandenburg", "Frankfurt (Oder)/Boossen (brb)", "1160.01", "JO72fj", "D631", "de"],
	["BNR Horizont", "Lom/RRS Lom (mnt)", "2220.01", "KN13ot", "8210", "bg"],
	["BNR Horizont", "Baykal (plv)", "2298.01", "KN23er", "8210", "bg"],
	["BNR Horizont", "Babyak (blg)", "2388.01", "KN11ux", "8210", "bg"],
	["BNR Radio Shumen", "Shumen/RRTS Venets (shm)", "2464.01", "KN33kl", "8236", "bg"],
	["BR Klassik", "Dillberg (bay)", "1133.01", "JN59qh", "D314", "de"]
].map(function(r){
	return ["87.600.000", r[0], r[1], r[2], r[3], r[4], "", r[5], ""];
}));
```
